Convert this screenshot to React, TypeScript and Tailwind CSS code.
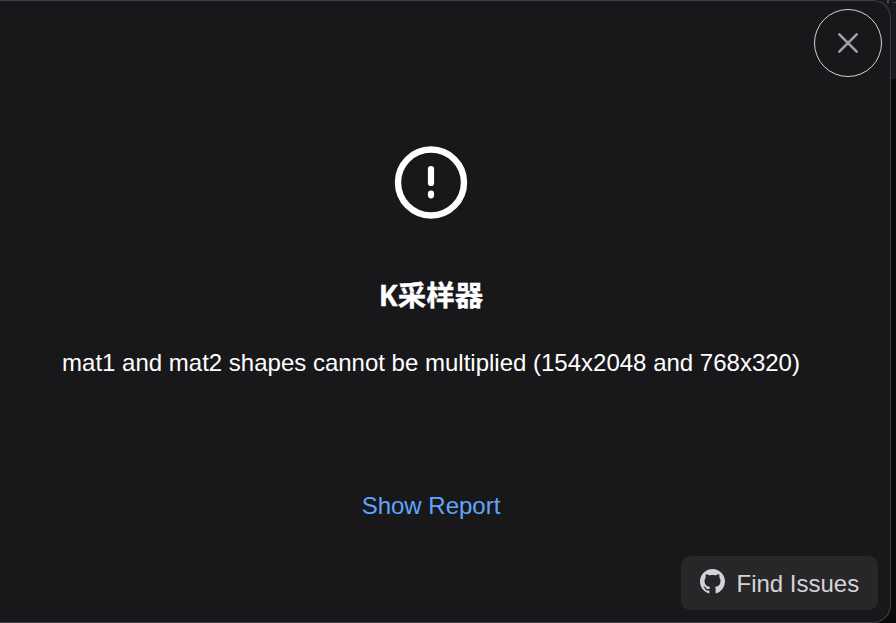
function GithubMark() {
  return (
    <svg className="-mt-[3px] size-[25px]" viewBox="0 0 16 16" fill="currentColor" aria-hidden="true">
      <path d="M8 0C3.58 0 0 3.58 0 8c0 3.54 2.29 6.53 5.47 7.59.4.07.55-.17.55-.38 0-.19-.01-.82-.01-1.49-2.01.37-2.53-.49-2.69-.94-.09-.23-.48-.94-.82-1.13-.28-.15-.68-.52-.01-.53.63-.01 1.08.58 1.23.82.72 1.21 1.87.87 2.33.66.07-.52.28-.87.51-1.07-1.78-.2-3.64-.89-3.64-3.95 0-.87.31-1.59.82-2.15-.08-.2-.36-1.02.08-2.12 0 0 .67-.21 2.2.82.64-.18 1.32-.27 2-.27s1.36.09 2 .27c1.53-1.04 2.2-.82 2.2-.82.44 1.1.16 1.92.08 2.12.51.56.82 1.27.82 2.15 0 3.07-1.87 3.75-3.65 3.95.29.25.54.73.54 1.48 0 1.07-.01 1.93-.01 2.2 0 .21.15.46.55.38A8.01 8.01 0 0 0 16 8c0-4.42-3.58-8-8-8Z" />
    </svg>
  );
}

export default function App() {
  return (
    <div className="relative h-[623px] w-[896px] overflow-hidden bg-[#0b0b0c] font-['Liberation_Sans',Arial,'Noto_Sans_CJK_SC',sans-serif] text-white">
      <div className="absolute right-0 top-0 h-[79px] w-4 bg-[#1a1a1c]" />
      <div className="absolute right-0 top-[2px] h-px w-[3px] bg-[#4a4a4d]" />
      <div className="absolute right-[7px] top-0 h-[3px] w-[2px] bg-[#4a4a4d]" />
      <main className="relative flex h-[623px] w-[891px] flex-col rounded-r-[18px] border border-l-0 border-[#3f3f46] bg-[#18181b]">
        <header className="flex h-[84px] justify-end pr-2 pt-2">
          <button
            aria-label="Close"
            className="flex size-[68px] items-center justify-center rounded-full border border-[#d4d4d8] text-[#a1a1aa]"
          >
            <svg width="22" height="22" viewBox="0 0 22 22" fill="none" stroke="currentColor" strokeWidth="2.6" strokeLinecap="round">
              <path d="M2.3 2.3 19.7 19.7M19.7 2.3 2.3 19.7" />
            </svg>
          </button>
        </header>
        <section className="flex w-[862px] flex-1 flex-col items-center pt-[61px]">
          <svg width="74" height="74" viewBox="0 0 74 74" fill="none" stroke="white">
            <circle cx="37" cy="36.5" r="33" strokeWidth="6.4" />
            <path d="M37 23V37M37 47.7V49.3" strokeWidth="6.2" strokeLinecap="round" />
          </svg>
          <h1 className="mt-[54px] font-['Open_Sans','Noto_Sans_CJK_SC',sans-serif] text-[28.5px] font-bold leading-[42px] [-webkit-text-stroke:0.3px_white]">K采样器</h1>
          <p className="mt-[29px] whitespace-nowrap text-2xl leading-9">
            mat1 and mat2 shapes cannot be multiplied (154x2048 and 768x320)
          </p>
          <button className="mt-[107px] text-2xl leading-9 text-[#60a5fa]">Show Report</button>
        </section>
        <footer className="flex justify-end pb-3 pr-3">
          <button className="flex h-[54px] w-[197px] items-center gap-3 rounded-[9px] bg-[#27272a] pl-[18.5px] text-2xl text-[#d4d4d8]">
            <GithubMark />
            <span className="pt-0.5">Find Issues</span>
          </button>
        </footer>
      </main>
    </div>
  );
}
